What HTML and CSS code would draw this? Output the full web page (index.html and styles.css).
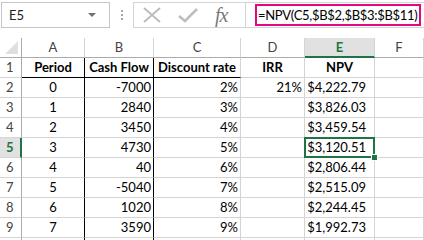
FILE: index.html
```html
<!DOCTYPE html>
<html>
<head>
<meta charset="utf-8">
<link rel="stylesheet" href="styles.css">
</head>
<body>
<div class="bar">
  <div class="namebox"><span>E5</span><span class="arrow"></span></div>
  <div class="dots"><i></i><i></i><i></i></div>
  <div class="btns">
    <svg class="ico" width="18" height="16" viewBox="0 0 18 16"><path d="M1 1 L17 15 M17 1 L1 15" stroke="#bdbdbd" stroke-width="2" fill="none"/></svg>
    <svg class="ico" width="20" height="16" viewBox="0 0 20 16"><path d="M1 9 L7 14 L19 2" stroke="#bdbdbd" stroke-width="2.6" fill="none"/></svg>
    <span class="fx">fx</span>
  </div>
  <div class="fbox"><div class="formula">=NPV(C5,$B$2,$B$3:$B$11)</div></div>
</div>
<div class="sheet">
  <div class="hd corner"></div>
  <div class="hd">A</div><div class="hd">B</div><div class="hd">C</div><div class="hd">D</div><div class="hd sel">E</div><div class="hd">F</div>

  <div class="rh">1</div>
  <div class="c ca bt b ctr">Period</div><div class="c cb bt b ctr">Cash Flow</div><div class="c bt b ctr">Discount rate</div><div class="c b ctr">IRR</div><div class="c b ctr">NPV</div><div class="c"></div>

  <div class="rh">2</div>
  <div class="c ca ctr">0</div><div class="c cb r">-7000</div><div class="c r">2%</div><div class="c r">21%</div><div class="c cur">$4,222.79</div><div class="c"></div>

  <div class="rh">3</div>
  <div class="c ca ctr">1</div><div class="c cb r">2840</div><div class="c r">3%</div><div class="c r"></div><div class="c cur">$3,826.03</div><div class="c"></div>

  <div class="rh">4</div>
  <div class="c ca ctr">2</div><div class="c cb r">3450</div><div class="c r">4%</div><div class="c r"></div><div class="c cur">$3,459.54</div><div class="c"></div>

  <div class="rh selr">5</div>
  <div class="c ca ctr">3</div><div class="c cb r">4730</div><div class="c r">5%</div><div class="c r"></div><div class="c cur active">$3,120.51<span class="frame"></span><span class="handle"></span></div><div class="c"></div>

  <div class="rh">6</div>
  <div class="c ca ctr">4</div><div class="c cb r">40</div><div class="c r">6%</div><div class="c r"></div><div class="c cur">$2,806.44</div><div class="c"></div>

  <div class="rh">7</div>
  <div class="c ca ctr">5</div><div class="c cb r">-5040</div><div class="c r">7%</div><div class="c r"></div><div class="c cur">$2,515.09</div><div class="c"></div>

  <div class="rh">8</div>
  <div class="c ca ctr">6</div><div class="c cb r">1020</div><div class="c r">8%</div><div class="c r"></div><div class="c cur">$2,244.45</div><div class="c"></div>

  <div class="rh">9</div>
  <div class="c ca ctr">7</div><div class="c cb r">3590</div><div class="c r">9%</div><div class="c r"></div><div class="c cur">$1,992.73</div><div class="c"></div>

  <div class="rh"></div>
  <div class="c ca"></div><div class="c cb"></div><div class="c"></div><div class="c"></div><div class="c"></div><div class="c"></div>
</div>
</body>
</html>
```
FILE: styles.css
```css
html, body {
  margin: 0;
  padding: 0;
  background: #fff;
}
body {
  width: 424px;
  height: 240px;
  overflow: hidden;
  font-family: Lato, "Liberation Sans", sans-serif;
  color: #000;
}
.bar {
  display: flex;
  align-items: stretch;
  height: 26px;
  margin-top: 2px;
  padding-left: 1px;
}
.namebox {
  flex: none;
  box-sizing: border-box;
  width: 109px;
  border: 1px solid #c6c6c6;
  display: flex;
  align-items: center;
  justify-content: space-between;
  padding: 0 13px 0 7px;
  font-size: 13px;
  color: #222;
}
.arrow {
  width: 0;
  height: 0;
  border-left: 4px solid transparent;
  border-right: 4px solid transparent;
  border-top: 4px solid #707070;
}
.dots {
  flex: none;
  width: 23px;
  display: flex;
  flex-direction: column;
  align-items: center;
  justify-content: center;
  gap: 2px;
}
.dots i {
  display: block;
  width: 2px;
  height: 2px;
  background: #a6a6a6;
}
.btns {
  flex: none;
  box-sizing: border-box;
  width: 112px;
  border: 1px solid #d4d4d4;
  border-right: none;
  display: flex;
  align-items: center;
  padding-left: 9px;
  gap: 17px;
}
.fx {
  font-family: "Liberation Serif", serif;
  font-style: italic;
  font-size: 20px;
  color: #7a7a7a;
  letter-spacing: -1px;
}
.fbox {
  box-sizing: border-box;
  flex: 1;
  min-width: 0;
  border: 1px solid #d4d4d4;
  border-right: none;
  padding: 1px 3px 1px 9px;
  display: flex;
}
.formula {
  box-sizing: border-box;
  flex: 1;
  min-width: 0;
  border: 2px solid #e4087e;
  font-size: 13px;
  line-height: 18px;
  letter-spacing: -0.3px;
  padding-left: 1px;
  white-space: nowrap;
  overflow: hidden;
  color: #000;
}
.sheet {
  display: grid;
  grid-template-columns: 22px 63px 69px 87px 64px 70px 49px;
  grid-auto-rows: 20px;
  margin-top: 10px;
}
.hd {
  box-sizing: border-box;
  border-right: 1px solid #d4d4d4;
  border-bottom: 1px solid #ababab;
  font-size: 13px;
  line-height: 19px;
  text-align: center;
  color: #444;
}
.corner {
  position: relative;
  border-right: 1px solid #ababab;
}
.corner::after {
  content: "";
  position: absolute;
  right: 3px;
  bottom: 3px;
  width: 0;
  height: 0;
  border-left: 13px solid transparent;
  border-bottom: 13px solid #dfdfdf;
}
.hd.sel {
  background: #e1e1e1;
  border-bottom: 2px solid #217346;
  color: #217346;
  font-weight: bold;
}
.rh {
  box-sizing: border-box;
  border-right: 1px solid #ababab;
  border-bottom: 1px solid #d4d4d4;
  font-size: 13px;
  line-height: 19px;
  padding-left: 6px;
  color: #444;
}
.rh.selr {
  background: #e1e1e1;
  border-right: 2px solid #217346;
  color: #217346;
  font-weight: bold;
}
.c {
  box-sizing: border-box;
  border-right: 1px solid #d4d4d4;
  border-bottom: 1px solid #d4d4d4;
  font-size: 13px;
  line-height: 19px;
  padding: 0 2px;
  white-space: nowrap;
}
.ca { border-right: 1px solid #000; }
.cb { border-right: 1px solid #000; }
.bt { border-bottom: 1px solid #000; }
.b { font-weight: bold; }
.ctr { text-align: center; }
.r { text-align: right; }
.cur { text-align: right; padding-right: 8px; }
.active { position: relative; }
.frame {
  position: absolute;
  left: -1px;
  top: -1px;
  right: -1px;
  bottom: -1px;
  border: 2px solid #217346;
}
.handle {
  position: absolute;
  right: -4px;
  bottom: -4px;
  width: 5px;
  height: 5px;
  background: #217346;
  border: 1px solid #fff;
}
```
